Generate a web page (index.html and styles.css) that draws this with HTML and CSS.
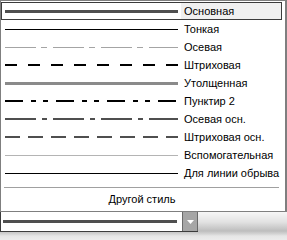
FILE: index.html
```html
<!DOCTYPE html>
<html>

<head>
  <title>Стиль линии</title>
  <meta charset="UTF-8">
  <link rel="stylesheet" href="styles.css">
</head>

<body>
  <div class="popup">
    <div class="item selected">
      <svg class="line" width="173" height="16"><line x1="0" y1="8.5" x2="173" y2="8.5" stroke="#4f4f4f" stroke-width="3"/></svg>
      <span class="name">Основная</span>
    </div>
    <div class="item">
      <svg class="line" width="173" height="16"><line x1="0" y1="8.5" x2="173" y2="8.5" stroke="#000" stroke-width="1"/></svg>
      <span class="name">Тонкая</span>
    </div>
    <div class="item">
      <svg class="line" width="173" height="16"><line x1="0" y1="8.5" x2="173" y2="8.5" stroke="#a4a4a4" stroke-width="1" stroke-dasharray="31 5 6 6"/></svg>
      <span class="name">Осевая</span>
    </div>
    <div class="item">
      <svg class="line" width="173" height="16"><line x1="0" y1="8" x2="173" y2="8" stroke="#000" stroke-width="2" stroke-dasharray="12 11"/></svg>
      <span class="name">Штриховая</span>
    </div>
    <div class="item">
      <svg class="line" width="173" height="16"><line x1="0" y1="8.5" x2="173" y2="8.5" stroke="#8a8a8a" stroke-width="3"/></svg>
      <span class="name">Утолщенная</span>
    </div>
    <div class="item">
      <svg class="line" width="173" height="16"><line x1="0" y1="8" x2="173" y2="8" stroke="#000" stroke-width="2" stroke-dasharray="18 8 5 7 5 8"/></svg>
      <span class="name">Пунктир 2</span>
    </div>
    <div class="item">
      <svg class="line" width="173" height="16"><line x1="0" y1="8" x2="173" y2="8" stroke="#4f4f4f" stroke-width="2" stroke-dasharray="31 6 5 6"/></svg>
      <span class="name">Осевая осн.</span>
    </div>
    <div class="item">
      <svg class="line" width="173" height="16"><line x1="0" y1="8" x2="173" y2="8" stroke="#4f4f4f" stroke-width="2" stroke-dasharray="15 8"/></svg>
      <span class="name">Штриховая осн.</span>
    </div>
    <div class="item">
      <svg class="line" width="173" height="16"><line x1="0" y1="8.5" x2="173" y2="8.5" stroke="#b4b4b4" stroke-width="1"/></svg>
      <span class="name">Вспомогательная</span>
    </div>
    <div class="item">
      <svg class="line" width="173" height="16"><line x1="0" y1="8.5" x2="173" y2="8.5" stroke="#000" stroke-width="1"/></svg>
      <span class="name">Для линии обрыва</span>
    </div>
    <div class="separator"></div>
    <div class="other">Другой стиль</div>
  </div>

  <div class="toolbar">
    <div class="combo">
      <div class="combo-value">
        <svg width="174" height="4"><line x1="0" y1="1.5" x2="174" y2="1.5" stroke="#4f4f4f" stroke-width="3"/></svg>
      </div>
      <div class="combo-button">
        <svg width="7" height="4"><polygon points="0,0 7,0 3.5,4" fill="#fff"/></svg>
      </div>
    </div>
  </div>
</body>

</html>
```

FILE: styles.css
```css
* {
  box-sizing: border-box;
}

body {
  margin: 0;
  width: 287px;
  height: 240px;
  background-color: #ffffff;
  font-family: "Liberation Sans", Arial, sans-serif;
  font-size: 11px;
  color: #000;
  overflow: hidden;
}

/* выпадающий список */
.popup {
  width: 287px;
  height: 212px;
  border: 1px solid #7f7f7f;
  border-right: 2px solid #7f7f7f;
  padding: 1px 2px 0 0;
  background-color: #fff;
}

.item {
  display: flex;
  align-items: center;
  width: 281px;
  height: 18px;
  border: 1px solid transparent;
}

.item.selected {
  border-color: #3c3c3c;
}

.line {
  display: block;
  margin-left: 3px;
  flex: none;
}

.name {
  flex: 1;
  height: 16px;
  line-height: 16px;
  margin-left: 3px;
  padding-left: 3px;
  white-space: nowrap;
}

.item.selected .name {
  background-color: #f0f0f0;
}

.separator {
  height: 1px;
  margin: 5px 4px 0 3px;
  background-color: #a0a0a0;
}

.other {
  height: 22px;
  line-height: 22px;
  text-align: center;
}

/* панель с комбобоксом */
.toolbar {
  height: 28px;
  background-image: linear-gradient(to bottom, #f6f6f6 0px, #e2e2e2 10px, #bdbdbd 19px, #c6c6c6 20px, #d4d4d4 22px, #e6e6e6 24px, #ececec 28px);
}

.combo {
  display: flex;
  width: 198px;
  height: 20px;
  border-left: 1px solid #3c3c3c;
  border-bottom: 1px solid #3c3c3c;
}

.combo-value {
  width: 181px;
  background-color: #fff;
  padding: 8px 0 0 2px;
}

.combo-value svg {
  display: block;
}

.combo-button {
  width: 16px;
  display: flex;
  align-items: center;
  justify-content: center;
  background-color: #a6a6a6;
  border-left: 1px solid #6a6a6a;
  border-right: 1px solid #6a6a6a;
}

.combo-button svg {
  display: block;
  margin-top: 1px;
}
```
